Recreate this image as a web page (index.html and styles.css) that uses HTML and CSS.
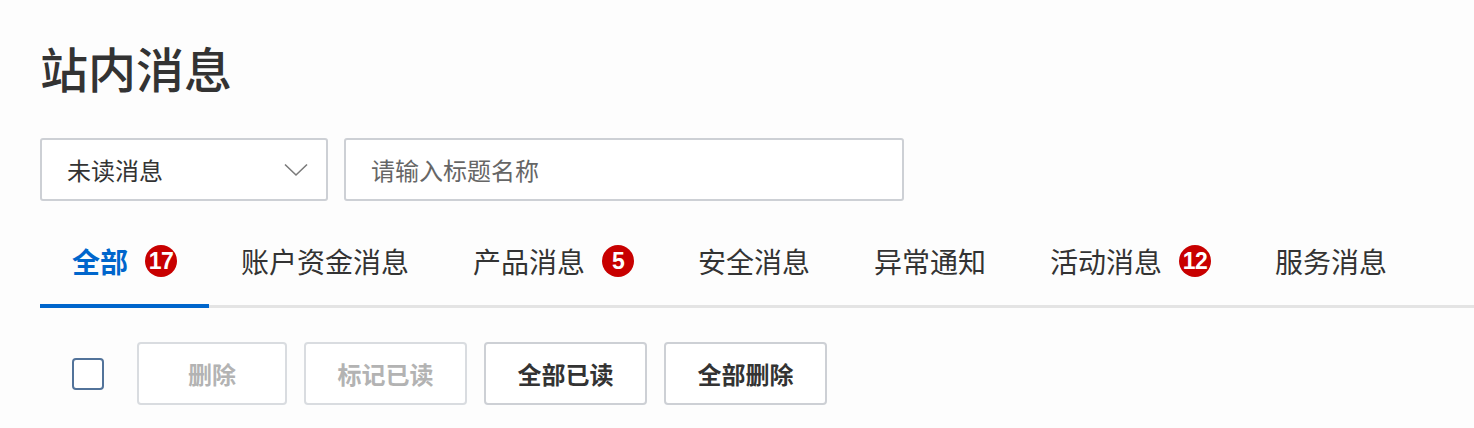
FILE: index.html
```html
<!DOCTYPE html>
<html lang="zh-CN">
<head>
<meta charset="utf-8">
<title>站内消息</title>
<link rel="stylesheet" href="styles.css">
</head>
<body>
<div class="page">
  <h1 class="title">站内消息</h1>
  <div class="filters">
    <div class="select">
      <span class="select-text">未读消息</span>
      <svg class="chevron" width="24" height="14" viewBox="0 0 24 14"><path d="M1 1.5 L12 12 L23 1.5" fill="none" stroke="#7a7a7a" stroke-width="1.6"/></svg>
    </div>
    <div class="search"><span class="placeholder">请输入标题名称</span></div>
  </div>
  <div class="tabs">
    <div class="tab active"><span>全部</span><span class="badge">17</span></div>
    <div class="tab"><span>账户资金消息</span></div>
    <div class="tab"><span>产品消息</span><span class="badge">5</span></div>
    <div class="tab"><span>安全消息</span></div>
    <div class="tab"><span>异常通知</span></div>
    <div class="tab"><span>活动消息</span><span class="badge">12</span></div>
    <div class="tab"><span>服务消息</span></div>
  </div>
  <div class="toolbar">
    <span class="checkbox"></span>
    <button class="btn btn-narrow" disabled>删除</button>
    <button class="btn" disabled>标记已读</button>
    <button class="btn">全部已读</button>
    <button class="btn">全部删除</button>
  </div>
</div>
</body>
</html>
```
FILE: styles.css
```css
html, body {
  margin: 0;
  padding: 0;
  background: #fdfdfd;
}
body {
  font-family: "Noto Sans CJK SC", "Noto Sans", sans-serif;
  color: #333;
}
.page {
  padding: 0 0 0 40px;
}
.title {
  margin: 0;
  padding-top: 34px;
  font-size: 48px;
  line-height: 66px;
  font-weight: 500;
  color: #333;
}
.filters {
  display: flex;
  gap: 16px;
  margin-top: 38px;
}
.select, .search {
  box-sizing: border-box;
  height: 63px;
  border: 2px solid #cdd0d5;
  border-radius: 3px;
  background: #fff;
  display: flex;
  align-items: center;
}
.select {
  width: 288px;
  padding: 0 18px 0 25px;
  justify-content: space-between;
}
.select-text {
  font-size: 24px;
  color: #333;
}
.chevron {
  display: block;
}
.search {
  width: 560px;
  padding: 0 25px;
}
.placeholder {
  font-size: 24px;
  color: #666;
}
.tabs {
  display: flex;
  margin-top: 23px;
  box-shadow: inset 0 -3px 0 #e4e4e4;
}
.tab {
  display: flex;
  align-items: center;
  gap: 17px;
  box-sizing: border-box;
  height: 84px;
  padding: 0 32px 6px 32px;
  border-bottom: 4px solid transparent;
  font-size: 28px;
  color: #333;
}
.tab.active {
  border-bottom-color: #0066cc;
  color: #0066cc;
  font-weight: 700;
}
.badge {
  display: inline-flex;
  align-items: center;
  justify-content: center;
  width: 32px;
  height: 32px;
  border-radius: 50%;
  background: #c80000;
  color: #fff;
  font-family: "Liberation Sans", Arial, sans-serif;
  font-size: 23px;
  font-weight: 700;
  letter-spacing: -0.5px;
}
.toolbar {
  display: flex;
  align-items: center;
  gap: 17px;
  margin-top: 34px;
  padding-left: 32px;
}
.checkbox {
  box-sizing: border-box;
  width: 32px;
  height: 32px;
  border: 2px solid #52739a;
  border-radius: 4px;
  background: #fff;
  margin-right: 16px;
}
.btn {
  box-sizing: border-box;
  height: 63px;
  min-width: 163px;
  padding: 0 30px;
  border: 2px solid #cdd0d5;
  border-radius: 4px;
  background: #fff;
  font-family: "Noto Sans CJK SC", "Noto Sans", sans-serif;
  font-size: 24px;
  font-weight: 700;
  color: #333;
}
.btn-narrow {
  min-width: 150px;
}
.btn:disabled {
  color: #b3b3b3;
  border-color: #d9dce0;
}
```
